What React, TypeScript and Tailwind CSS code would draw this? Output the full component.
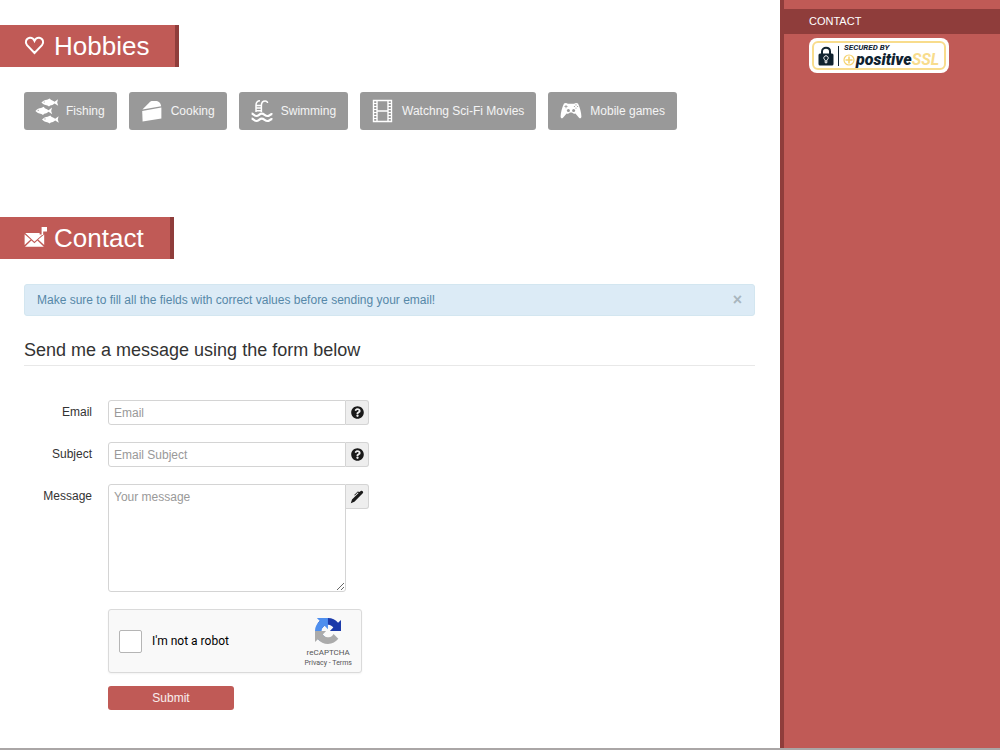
import type { ReactNode } from "react";
import { useState } from "react";
import { FaQuestionCircle } from "react-icons/fa";

function FishIcon() {
  const fish =
    "M0 4.2 C1.6 2.4 3.6 1.5 5.6 1.3 L8.4 0 L9.4 1.4 C11 1.9 12.2 2.7 13.2 3.4 L16.6 .8 L15.8 4.2 L16.8 7.4 L13.2 5 C11.8 6.2 10.2 6.8 8.8 7 L7.6 8.2 L6 7.1 C3.4 6.8 1.4 5.8 0 4.2Z";
  return (
    <svg viewBox="0 0 24 26" className="h-[26px] w-6 shrink-0 text-white" fill="currentColor">
      <path d={fish} transform="translate(6.4 .4)" />
      <path d={fish} transform="translate(.4 8.8)" />
      <path d={fish} transform="translate(7 17.4)" />
      <g fill="#999999">
        <circle cx="9.2" cy="4" r=".6" />
        <circle cx="3.2" cy="12.3" r=".6" />
        <circle cx="10" cy="20.9" r=".6" />
      </g>
    </svg>
  );
}

function CakeIcon() {
  return (
    <svg viewBox="0 0 24 26" className="h-[26px] w-6 shrink-0 text-white" fill="currentColor">
      <path d="M2.4 11.4 L9.4 4.4 C10.2 3.4 11 2.9 12.4 2.9 H15.4 C18.6 2.9 20.6 4.4 21.2 8.2Z" />
      <path d="M2.2 13 L21.4 9.6 V20.4 L2.6 23.4Z" />
    </svg>
  );
}

function PoolIcon() {
  return (
    <svg
      viewBox="0 0 24 26"
      className="h-[26px] w-6 shrink-0 text-white"
      fill="none"
      stroke="currentColor"
    >
      <path
        strokeWidth="1.5"
        d="M6 14 V7 C6 4.5 7.4 2.8 10 2.8 M11.4 14 V7.6 C11.4 4.8 13 3 15.2 3 C16.6 3 17.4 3.8 17.6 5 M6 7.4 H11.4 M6 10 H11.4 M6 12.8 H11.4"
      />
      <path
        strokeWidth="2.2"
        d="M1.6 15.6 C3.6 15.6 4 18 6.4 18 S9.4 15.6 11.8 15.6 S15 18 17.4 18 S20 15.8 22.4 16.2 M1.6 20.6 C3.6 20.6 4 23 6.4 23 S9.4 20.6 11.8 20.6 S15 23 17.4 23 S20 20.8 22.4 21.2"
      />
    </svg>
  );
}

function FilmIcon() {
  return (
    <svg
      viewBox="0 0 24 26"
      className="h-[26px] w-6 shrink-0 text-white"
      fill="none"
      stroke="currentColor"
    >
      <path strokeWidth="1.4" d="M2.5 2.5 H20.5 V23.5 H2.5Z M6 2.5 V23.5 M17 2.5 V23.5 M6 13 H17" />
      <path
        strokeWidth="1.2"
        d="M2 5.5 H6 M2 8.5 H6 M2 11.5 H6 M2 14.5 H6 M2 17.5 H6 M2 20.5 H6 M17 5.5 H21 M17 8.5 H21 M17 11.5 H21 M17 14.5 H21 M17 17.5 H21 M17 20.5 H21"
      />
    </svg>
  );
}

function GamepadIcon() {
  return (
    <svg viewBox="0 0 24 26" className="h-[26px] w-6 shrink-0 text-white" fill="currentColor">
      <path d="M5 5.6 C6 4.8 8 4.8 8.8 5.8 H15.2 C16 4.8 18 4.8 19 5.6 C20.8 9 22.4 15 22.4 18.6 C22.4 20.4 21 20.8 20 19.8 L16.4 15.4 C15.2 16 13.8 15.8 13 14.6 H11 C10.2 15.8 8.8 16 7.6 15.4 L4 19.8 C3 20.8 1.6 20.4 1.6 18.6 C1.6 15 3.2 9 5 5.6Z" />
      <g fill="#999999">
        <path d="M6.6 7 H7.4 V8.2 H8.6 V9 H7.4 V10.2 H6.6 V9 H5.4 V8.2 H6.6Z" />
        <circle cx="9.4" cy="12.6" r="1.5" />
        <circle cx="14.6" cy="12.6" r="1.5" />
        <circle cx="17" cy="6.9" r=".6" />
        <circle cx="17" cy="10.1" r=".6" />
        <circle cx="15.4" cy="8.5" r=".6" />
        <circle cx="18.6" cy="8.5" r=".6" />
      </g>
    </svg>
  );
}

function HeartIcon() {
  return (
    <svg
      viewBox="0 0 22 22"
      className="size-[22px] shrink-0"
      fill="none"
      stroke="currentColor"
      strokeWidth="2"
    >
      <path d="M10.5 18 L3 10.2 C.8 7.6 1.8 3.4 5.8 2.8 C8 2.6 9.6 3.8 10.5 5.8 C11.4 3.8 13 2.6 15.2 2.8 C19.2 3.4 20.2 7.6 18 10.2Z" />
    </svg>
  );
}

function MailIcon() {
  return (
    <svg viewBox="0 0 24 22" className="h-[22px] w-6 shrink-0" fill="currentColor">
      <path d="M1.2 6 H15.6 V7.4 H18.6 L10.4 14.8Z" />
      <path d="M.6 7.2 L6.6 12.4 L.6 18Z" />
      <path d="M20.2 7.4 V18 L14.2 12.4Z" />
      <path d="M7.4 13.4 L10.4 16.2 L13.4 13.4 L19.8 19.8 H1Z" />
      <path d="M17.6 0 H23 V4.6 H19.2 V8 H17.6Z" />
    </svg>
  );
}

function PenIcon() {
  return (
    <svg viewBox="0 0 14 14" className="size-3.5" fill="currentColor">
      <path d="M.8 13.2 L2 9.6 L8.6 3 L7.8 2.6 L4.8 5.6 L4.2 5 L7.8 1.4 L9.4 2 L10.8 .9 C12 .2 13.8 1.6 13 3 L4.4 11.8Z" />
    </svg>
  );
}

function RecaptchaLogo() {
  return (
    <svg viewBox="0 0 64 64" className="size-[26px]">
      <path
        fill="#1c3aa9"
        d="M64 31.955l-.033-1.37V4.687l-7.16 7.16C50.948 4.674 42.033.093 32.05.093c-10.4 0-19.622 4.96-25.458 12.64l11.736 11.86a15.55 15.55 0 0 1 4.754-5.334c2.05-1.6 4.952-2.906 8.968-2.906.485 0 .86.057 1.135.163 4.976.393 9.288 3.14 11.828 7.124l-8.307 8.307L64 31.953"
      />
      <path
        fill="#4f8fee"
        d="M31.862.094l-1.37.033H4.594l7.16 7.16C4.58 13.147 0 22.06 0 32.046c0 10.4 4.96 19.622 12.64 25.458L24.5 45.768a15.56 15.56 0 0 1-5.334-4.754c-1.6-2.05-2.906-4.952-2.906-8.968 0-.485.057-.86.163-1.135.393-4.976 3.14-9.288 7.124-11.828l8.307 8.307L31.86.095"
      />
      <path
        fill="#ababab"
        d="M.001 32.045l.033 1.37v25.898l7.16-7.16c5.86 7.173 14.774 11.754 24.76 11.754 10.4 0 19.622-4.96 25.458-12.64l-11.736-11.86a15.55 15.55 0 0 1-4.754 5.334c-2.05 1.6-4.952 2.906-8.968 2.906-.485 0-.86-.057-1.135-.163-4.976-.393-9.288-3.14-11.828-7.124l8.307-8.307L0 32.045"
      />
    </svg>
  );
}

function SslBadge() {
  return (
    <a href="#ssl" className="block w-[140px] rounded-lg bg-white p-[3px] text-[#10222f]">
      <span className="flex h-[29px] items-center gap-1 rounded-md border-2 border-[#f8dc8c] pl-1">
        <svg viewBox="0 0 16 20" className="h-5 w-4 shrink-0">
          <path d="M4 9 V5.4 C4 .6 12 .6 12 5.4 V9" fill="none" stroke="#10222f" strokeWidth="2" />
          <rect x=".5" y="7.5" width="15" height="12" rx="1.5" fill="#10222f" />
          <path
            d="M7.2 16.8 V14 A2.2 2.2 0 1 1 8.8 14 V16.8Z"
            fill="none"
            stroke="#fff"
            strokeWidth="1"
          />
        </svg>
        <span className="h-5 w-px bg-[#10222f]" />
        <span className="flex flex-col font-[Roboto,sans-serif] italic">
          <span className="pl-px text-[8px] leading-[8px] font-bold">SECURED BY</span>
          <span className="flex items-center gap-px">
            <svg viewBox="0 0 12 12" className="size-3 shrink-0" fill="none" stroke="#f5d26e">
              <circle cx="6" cy="6" r="5" strokeWidth="1.2" />
              <path d="M6 2.5 V9.5 M2.5 6 H9.5" strokeWidth="1.6" />
            </svg>
            <span className="text-[16px] leading-[15px] font-black">
              positive<span className="font-bold text-[#f8dc8c]">SSL</span>
            </span>
          </span>
        </span>
      </span>
    </a>
  );
}

const hobbies = [
  { name: "Fishing", icon: <FishIcon /> },
  { name: "Cooking", icon: <CakeIcon /> },
  { name: "Swimming", icon: <PoolIcon /> },
  { name: "Watchng Sci-Fi Movies", icon: <FilmIcon /> },
  { name: "Mobile games", icon: <GamepadIcon /> },
];

function SectionTitle({ icon, children }: { icon: ReactNode; children: ReactNode }) {
  return (
    <h2 className="flex h-[42px] w-fit items-center gap-2 border-r-4 border-[#8f3d3b] bg-[#c05a56] pr-[26px] pl-6 text-[26px] text-white">
      <span className="flex w-[22px]">{icon}</span>
      {children}
    </h2>
  );
}

function Addon({ children }: { children: ReactNode }) {
  return (
    <span className="flex h-[25px] w-[23px] items-center justify-center rounded-r-[3px] border border-l-0 border-[#d4d4d4] bg-[#eeeeee] text-[#1a1a1a]">
      {children}
    </span>
  );
}

function Field({ id, label, children }: { id: string; label: string; children: ReactNode }) {
  return (
    <div className="flex items-start gap-4">
      <label htmlFor={id} className="w-[68px] text-right leading-[25px]">
        {label}
      </label>
      <div className="flex items-start">{children}</div>
    </div>
  );
}

export default function App() {
  const [showAlert, setShowAlert] = useState(true);

  return (
    <div className="flex min-h-screen border-b-2 border-[#aaa6a6] bg-white font-['Liberation_Sans',Arial,sans-serif] text-xs text-[#333333]">
      <main className="min-w-0 flex-1 pt-[25px] pb-9">
        <section>
          <SectionTitle icon={<HeartIcon />}>Hobbies</SectionTitle>
          <ul className="mt-[25px] flex flex-wrap gap-3 px-6">
            {hobbies.map((hobby) => (
              <li
                key={hobby.name}
                className="flex h-[38px] items-center gap-[7px] rounded-[3px] bg-[#999999] pr-3 pl-[11px] whitespace-nowrap text-white/90"
              >
                {hobby.icon}
                {hobby.name}
              </li>
            ))}
          </ul>
        </section>

        <section className="mt-[87px]">
          <SectionTitle icon={<MailIcon />}>Contact</SectionTitle>
          <div className="mt-[25px] pr-[25px] pl-6">
            {showAlert && (
              <div
                role="alert"
                className="flex h-8 items-center justify-between rounded-[3px] border border-[#d3e6f0] bg-[#dcebf6] px-3 text-[#5688a8]"
              >
                Make sure to fill all the fields with correct values before sending your email!
                <button
                  type="button"
                  aria-label="Close"
                  className="text-base leading-4 font-bold text-[#a9b6be]"
                  onClick={() => setShowAlert(false)}
                >
                  ×
                </button>
              </div>
            )}
            <h3 className="mt-5 border-b border-[#e8e8e8] pb-px text-[18px] leading-7">
              Send me a message using the form below
            </h3>

            <form
              className="mt-[34px] flex flex-col gap-[17px]"
              onSubmit={(e) => e.preventDefault()}
            >
              <Field id="email" label="Email">
                <input
                  id="email"
                  type="email"
                  placeholder="Email"
                  className="h-[25px] w-[238px] rounded-l-[3px] border border-[#d4d4d4] px-[5px] placeholder:text-[#999999]"
                />
                <Addon>
                  <FaQuestionCircle size={13} />
                </Addon>
              </Field>
              <Field id="subject" label="Subject">
                <input
                  id="subject"
                  type="text"
                  placeholder="Email Subject"
                  className="h-[25px] w-[238px] rounded-l-[3px] border border-[#d4d4d4] px-[5px] placeholder:text-[#999999]"
                />
                <Addon>
                  <FaQuestionCircle size={13} />
                </Addon>
              </Field>
              <Field id="message" label="Message">
                <textarea
                  id="message"
                  placeholder="Your message"
                  className="h-[108px] w-[238px] rounded-[3px] rounded-tr-none border border-[#d4d4d4] px-[5px] py-1 placeholder:text-[#999999]"
                />
                <Addon>
                  <PenIcon />
                </Addon>
              </Field>

              <div className="flex flex-col items-start gap-[13px] pl-[84px]">
                <div className="flex h-16 w-[254px] items-center justify-between rounded-[3px] border border-[#dadada] bg-[#f9f9f9] pr-[9px] pl-2.5 font-[Roboto,sans-serif] text-black shadow-xs">
                  <div className="flex items-center gap-2.5">
                    <input
                      id="robot"
                      type="checkbox"
                      className="size-[23px] appearance-none rounded-xs border border-[#b5b5b5] bg-white checked:bg-[#4f8fee]"
                    />
                    <label htmlFor="robot">I'm not a robot</label>
                  </div>
                  <div className="flex flex-col items-center pt-1 text-[#555555]">
                    <RecaptchaLogo />
                    <span className="mt-1 text-[8px] leading-[10px]">reCAPTCHA</span>
                    <span className="text-[7px] leading-[10px]">
                      <a href="#privacy">Privacy</a> - <a href="#terms">Terms</a>
                    </span>
                  </div>
                </div>
                <button
                  type="submit"
                  className="h-6 w-[126px] rounded-[3px] bg-[#c05a56] text-white/90"
                >
                  Submit
                </button>
              </div>
            </form>
          </div>
        </section>
      </main>

      <aside className="w-[220px] shrink-0 border-l-4 border-[#8f3d3b] bg-[#c05a56] pt-[9px]">
        <nav>
          <a
            href="#contact"
            className="block bg-[#8f3d3b] pl-[25px] text-[11px] leading-[25px] text-white"
          >
            CONTACT
          </a>
        </nav>
        <div className="mt-1 pl-[25px]">
          <SslBadge />
        </div>
      </aside>
    </div>
  );
}
